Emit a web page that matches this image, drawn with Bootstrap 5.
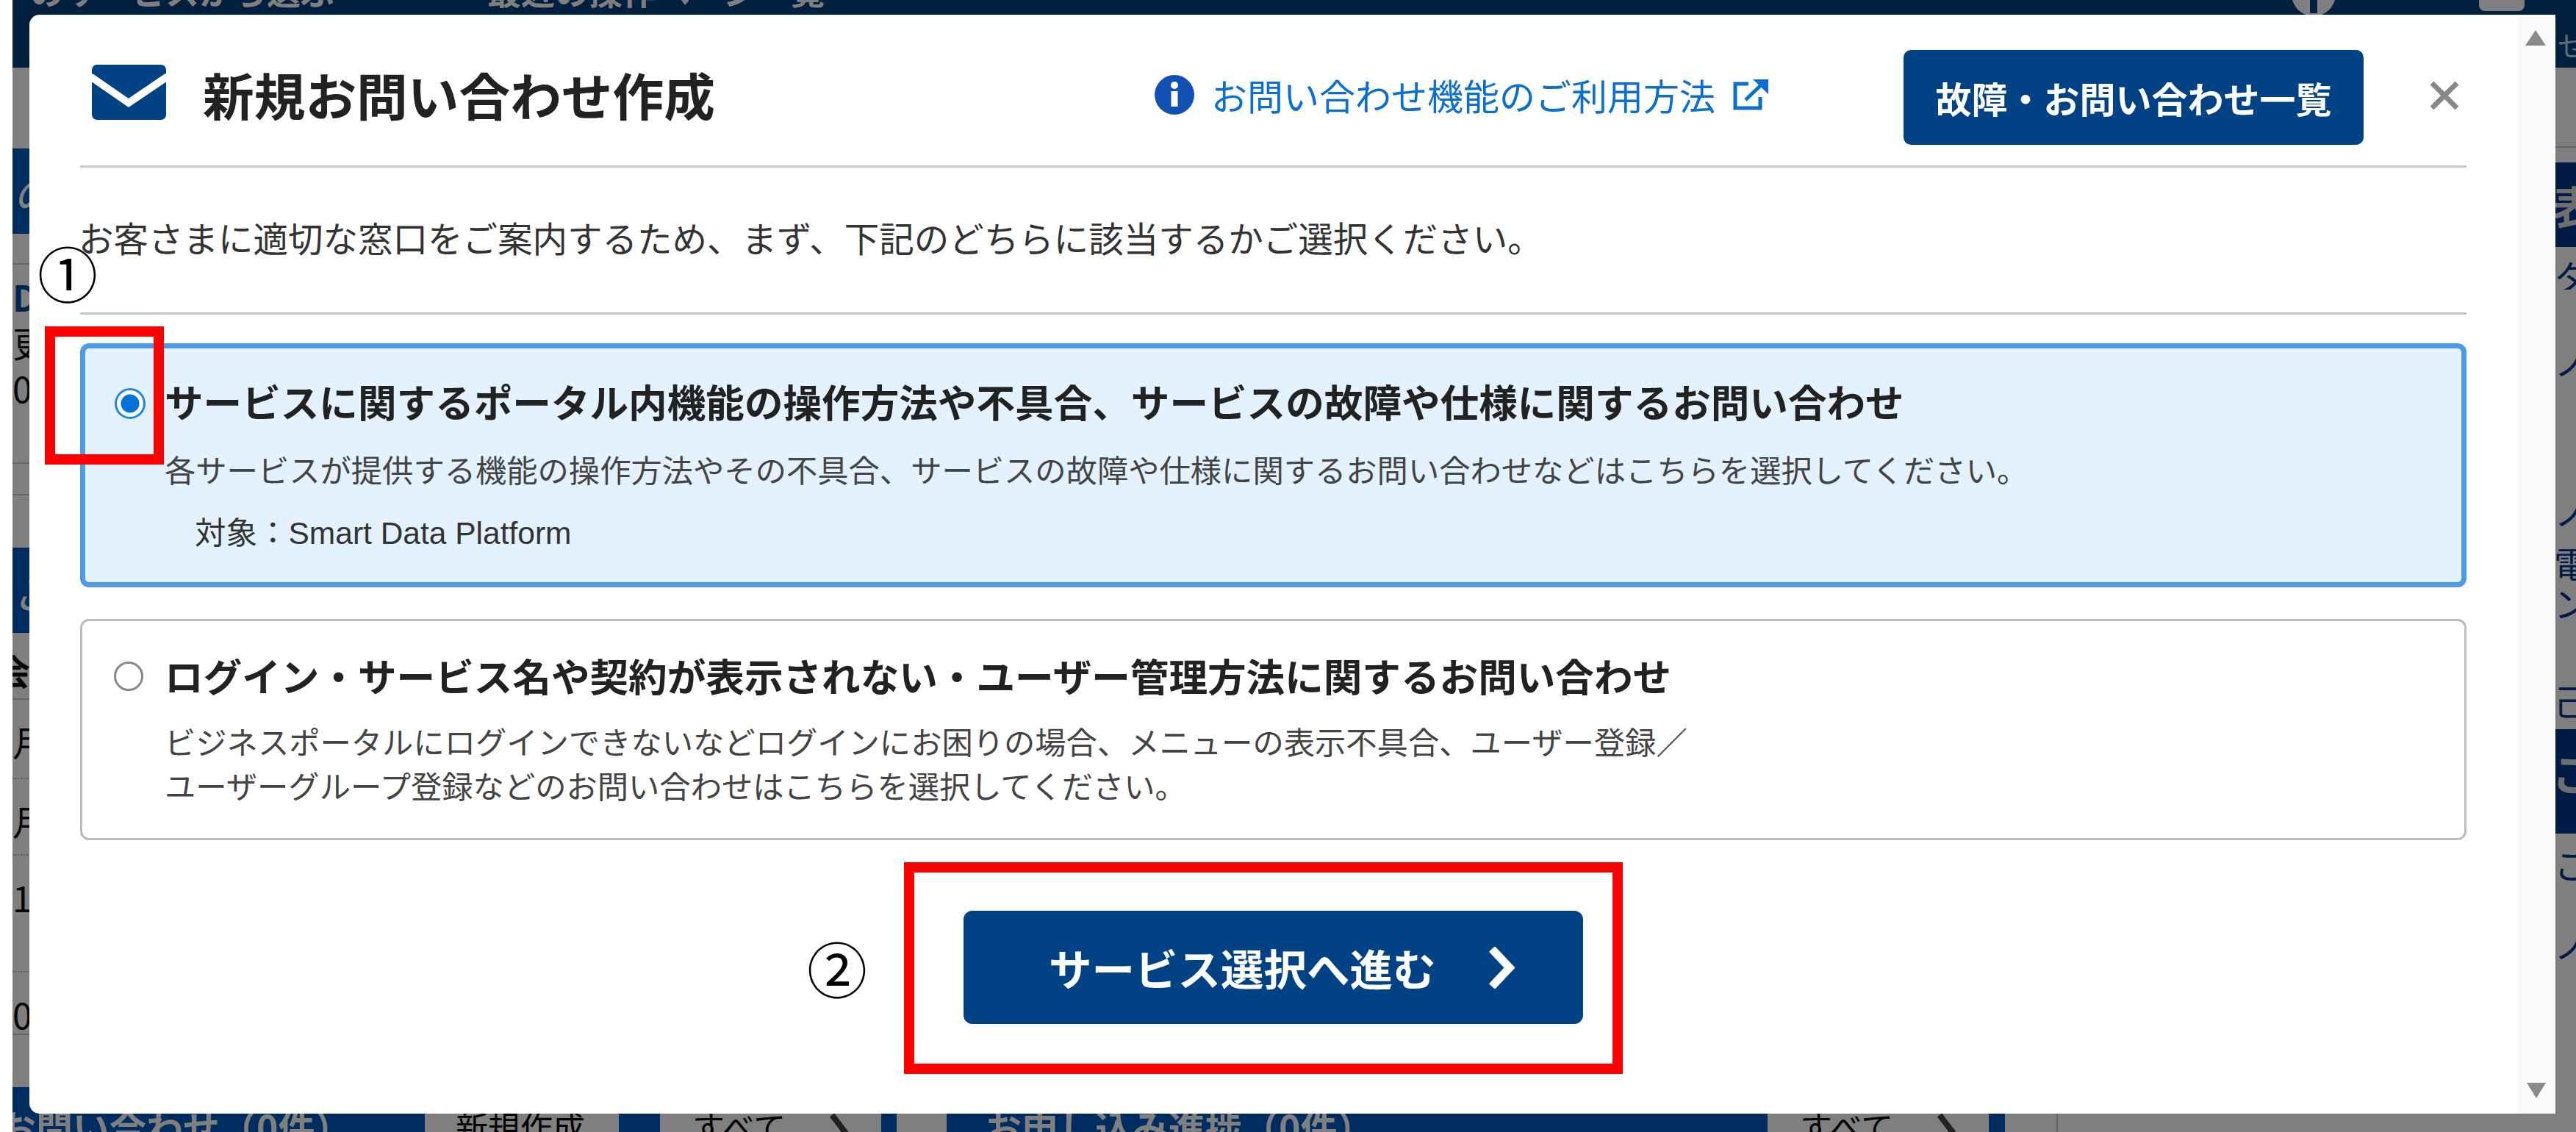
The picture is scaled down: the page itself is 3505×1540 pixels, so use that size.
<!DOCTYPE html>
<html lang="ja">
<head>
<meta charset="utf-8">
<title>新規お問い合わせ作成</title>
<link href="https://cdn.jsdelivr.net/npm/bootstrap@5.3.0/dist/css/bootstrap.min.css" rel="stylesheet">
<style>
html,body{height:100%;overflow:hidden;background:#fff}
body{font-family:"Liberation Sans","Noto Sans CJK JP",sans-serif;color:#333}
.ja{font-family:"Noto Sans CJK JP","Liberation Sans",sans-serif}
/* page behind the dialog */
.bg-page{margin-left:17px;width:3488px;height:1540px;overflow:hidden;background:#fff;color:#111;font-size:48px;line-height:60px;white-space:nowrap}
.bg-top{height:92px;background:#024080;color:#fff}
.bg-top-t{font-size:46px;line-height:46px;font-weight:700;margin-top:-37px}
.bg-top-t1{margin-left:24px}
.bg-top-t2{margin-left:208px}
.bg-top-c{width:60px;height:60px;margin-top:-38px;flex:none}
.bg-top-r{width:62px;height:62px;margin-top:-47px;margin-left:195px;flex:none}
.bg-top-s{flex:0 0 25px;width:25px;margin-left:45px;margin-top:30px;font-size:40px;color:#bcd4ee}
.bg-mid{height:1387px}
.bg-left{width:100px;flex:none;display:grid;grid-template-rows:110px 116px 42px 271px 43px 71px 116px 91px 108px 104px 159px 85px 71px}
.bg-right{width:60px;flex:none;padding-left:0;display:grid;grid-template-rows:109px 20px 115px 14px 44px 71px 127px 77px 71px 54px 133px 65px 142px 16px 58px 50px 50px 171px}
.lnav{background:#005abe;color:#fff;font-size:60px;font-style:italic;line-height:116px;margin-left:-27px;padding-left:27px;overflow:hidden}
.rnav{background:#00368c;color:#ddd;font-size:60px;font-weight:700;line-height:115px;padding-left:28px}
.ln{border-bottom:2px solid #ccc}
.ldot{border-bottom:2px dotted #bbb}
.lpad{padding-top:12px}
.lbold{font-weight:700;padding-top:20px;margin-left:-24px}
.ldat{padding-top:26px}
.lblue{color:#004a9e;font-weight:700;line-height:62px}
.ltext{line-height:62px}
.rtxt{color:#00368c;padding-left:30px;line-height:50px;overflow:hidden}
.bg-bottom{height:61px;background:#fff;font-size:50px}
.bb-nav{background:#005abe;color:#fff;font-weight:700;padding-top:23px;line-height:60px;overflow:hidden}
.bb-a{width:561px;padding-left:0;text-indent:-18px}
.bb-b{width:56px}
.bb-c{width:21px}
.bb-d{width:68px;background:#fff}
.bb-e{width:1117px;padding-left:52px}
.bb-f{width:22px}
.bb-btn{background:#fff;color:#000;font-size:44px;font-weight:400;padding-top:23px;line-height:60px;overflow:hidden}
.bb-b1{width:264px;padding-left:42px}
.bb-b2{width:301px;padding-left:44px}
.bb-rest{width:70px}
.bb-line{border-left:2px solid #ccc;flex-grow:1}
.bb-chev{margin-left:59px;margin-top:12px;flex:none}
.modal-backdrop{left:17px}
/* dialog */
.dlg.modal-dialog{max-width:none;width:3437px;margin:20px 0 0 40px;pointer-events:auto}
.dlg .modal-content{height:1495px;border:0;border-radius:14px 0 0 14px;padding:0 121px 0 69px;background:#fff}
.scroll-track{position:absolute;top:0;right:0;bottom:0;width:52px;background:#fafafa}
.scroll-up{position:absolute;left:11px;top:21px}
.scroll-down{position:absolute;left:13px;bottom:21px}
.dlg-head{height:208px;padding-top:20px;border-bottom:3px solid #c5c7d3}
.mail-ico{margin-left:16px;margin-bottom:15px}
.dlg-title{margin:0 0 10px 50px;font-size:69.7px;line-height:90px;font-weight:700;color:#222}
.help{margin-left:auto;color:#0b6fd1;font-size:49px;line-height:60px;text-decoration:none;margin-bottom:8px}
.help-txt{margin:0 23px 0 23px}
.list-btn.btn{width:626px;height:129px;margin-left:184px;padding:0;background:#014285;border:0;border-radius:10px;color:#fff;font-size:49px;font-weight:700;--bs-btn-hover-bg:#014285}
.x-btn.btn{margin:0 10px 5px 90px;padding:0;border:0;line-height:0}
.lead-txt{padding-top:65px;height:200px;margin:0;font-size:47.5px;line-height:60px;color:#333;border-bottom:3px solid #c5c5c5;text-indent:-2px}
.opt{border-radius:12px}
.opt-on{margin-top:39px;height:332px;border:7px solid #4d9ae6;background:#e3f2fe;padding:36px 0 0 40px}
.opt-off{margin-top:43px;height:301px;border:3px solid #bbb;background:#fff;padding:38px 0 0 43px}
.opt-radio.form-check-input{flex:none;margin:0;float:none;background-color:#fff}
.opt-on .opt-radio.form-check-input{width:42px;height:42px;margin-top:18px;border:3px solid #1f86e0;background-image:radial-gradient(circle,#0272d9 0 12px,#fff 13px)}
.opt-off .opt-radio.form-check-input{width:40px;height:40px;margin-top:17px;border:3px solid #888}
.opt-body-a{margin-left:26px}
.opt-body-b{margin-left:29px}
.opt-title{font-size:52.6px;line-height:70px;font-weight:700;color:#222;white-space:nowrap;display:block;margin:0}
.opt-sub{font-size:42.3px;line-height:60px;color:#444;margin:28px 0 0}
.opt-off .opt-sub{margin-top:25px}
.opt-target{font-size:42.5px;line-height:60px;color:#333;margin:24px 0 0 41px}
.go-row{margin-top:96px}
.go-btn.btn{width:843px;height:154px;padding:0 0 0 116px;background:#014285;border:0;border-radius:12px;color:#fff;font-size:58.5px;font-weight:700;--bs-btn-hover-bg:#014285}
.go-chev{margin-left:71px}
/* annotations on top of the dialog */
.red-mark{position:absolute;border:14px solid #f00;pointer-events:none}
.red-1{left:21px;top:424px;width:162px;height:188px}
.red-2{left:1190px;top:1153px;width:978px;height:288px}
.num-mark{position:absolute;font-family:"Noto Sans CJK JP",serif;font-size:82px;line-height:82px;color:#000}
.num-1{left:11px;top:309px}
.num-2{left:1058px;top:1255px}
.lat{font-family:"Liberation Sans",sans-serif}
</style>
</head>
<body>
<div class="bg-page ja">
  <div class="bg-top d-flex align-items-start">
    <span class="bg-top-t bg-top-t1">のサービスから選ぶ</span>
    <span class="bg-top-t bg-top-t2">最近の操作ページ一覧</span>
    <span class="flex-grow-1"></span>
    <svg class="bg-top-c" viewBox="0 0 60 60"><circle cx="30" cy="30" r="30" fill="#fff"/><rect x="25" y="26" width="10" height="30" fill="#024080"/></svg>
    <svg class="bg-top-r" viewBox="0 0 62 62"><rect width="62" height="62" rx="8" fill="#fff"/><rect x="26" y="30" width="10" height="14" fill="#024080"/></svg>
    <span class="bg-top-s">せ</span>
  </div>
  <div class="bg-mid d-flex justify-content-between">
    <div class="bg-left">
      <div></div>
      <div class="lnav">の</div>
      <div class="ln"></div>
      <div class="ln lpad">
        <div class="lblue">D</div>
        <div class="ltext">更</div>
        <div class="ltext">00</div>
      </div>
      <div class="ln"></div>
      <div></div>
      <div class="lnav">ご</div>
      <div class="ln lbold">会員</div>
      <div class="ldot ldat">月</div>
      <div class="ldot ldat">月</div>
      <div class="ldot ldat">1/</div>
      <div class="ln ldat">0/</div>
      <div></div>
    </div>
    <div class="bg-right">
      <div class="ln"></div>
      <div></div>
      <div class="rnav">表</div>
      <div></div>
      <div class="rtxt">タ</div>
      <div></div>
      <div class="rtxt">ノ</div>
      <div></div>
      <div class="rtxt">ノ</div>
      <div class="rtxt">電</div>
      <div class="rtxt">ン</div>
      <div class="rtxt">己</div>
      <div class="rnav">ご</div>
      <div></div>
      <div class="rtxt">こ</div>
      <div></div>
      <div class="rtxt">ノ</div>
      <div></div>
    </div>
  </div>
  <div class="bg-bottom d-flex">
    <div class="bb-nav bb-a">お問い合わせ（0件）</div>
    <div class="bb-btn bb-b1">新規作成</div>
    <div class="bb-nav bb-b"></div>
    <div class="bb-btn bb-b2 d-flex"><span>すべて</span><svg class="bb-chev" width="26" height="50" viewBox="0 0 26 50"><polyline points="4,3 21,25 4,47" fill="none" stroke="#444" stroke-width="8"/></svg></div>
    <div class="bb-nav bb-c"></div>
    <div class="bb-d"></div>
    <div class="bb-nav bb-e">お申し込み進捗（0件）</div>
    <div class="bb-btn bb-b2 d-flex"><span>すべて</span><svg class="bb-chev" width="26" height="50" viewBox="0 0 26 50"><polyline points="4,3 21,25 4,47" fill="none" stroke="#444" stroke-width="8"/></svg></div>
    <div class="bb-nav bb-f"></div>
    <div class="bb-rest"></div>
    <div class="bb-line"></div>
  </div>
</div>

<div class="modal-backdrop show"></div>

<div class="modal d-block" tabindex="-1">
  <div class="modal-dialog dlg">
    <div class="modal-content ja">
      <div class="scroll-track">
        <svg class="scroll-up" width="28" height="21" viewBox="0 0 28 21"><path d="M14 0 L28 21 H0 Z" fill="#8a8a8a"/></svg>
        <svg class="scroll-down" width="26" height="21" viewBox="0 0 26 21"><path d="M0 0 H26 L13 21 Z" fill="#8a8a8a"/></svg>
      </div>

      <div class="dlg-head d-flex align-items-center align-self-stretch">
        <svg class="mail-ico flex-shrink-0" width="101" height="75" viewBox="0 0 101 75"><rect width="101" height="75" rx="7" fill="#014285"/><polyline points="-2,16 50,52 103,16" fill="none" stroke="#fff" stroke-width="10"/></svg>
        <h1 class="dlg-title">新規お問い合わせ作成</h1>
        <a class="help d-flex align-items-center" href="#">
          <svg width="54" height="54" viewBox="0 0 54 54"><circle cx="27" cy="27" r="27" fill="#1250b4"/><circle cx="27" cy="14" r="5" fill="#fff"/><rect x="22.500" y="22" width="9" height="21" fill="#fff"/></svg>
          <span class="help-txt">お問い合わせ機能のご利用方法</span>
          <svg width="49" height="42" viewBox="0 0 49 42"><path d="M22 6 H4 V39 H38 V24" fill="none" stroke="#0b6fd1" stroke-width="5"/><path d="M18 28 L42 5" fill="none" stroke="#0b6fd1" stroke-width="5"/><path d="M28 0 H49 V20 Z" fill="#0b6fd1"/></svg>
        </a>
        <button type="button" class="btn list-btn flex-shrink-0">故障・お問い合わせ一覧</button>
        <button type="button" class="btn x-btn flex-shrink-0" aria-label="閉じる"><svg width="40" height="38" viewBox="0 0 40 38"><path d="M3 2 L37 36 M37 2 L3 36" stroke="#888" stroke-width="7" fill="none"/></svg></button>
      </div>

      <p class="lead-txt">お客さまに適切な窓口をご案内するため、まず、下記のどちらに該当するかご選択ください。</p>

      <div class="opt opt-on d-flex">
        <input class="form-check-input opt-radio" type="radio" name="kind" id="kind1" checked>
        <div class="opt-body-a">
          <label class="opt-title" for="kind1">サービスに関するポータル内機能の操作方法や不具合、サービスの故障や仕様に関するお問い合わせ</label>
          <p class="opt-sub">各サービスが提供する機能の操作方法やその不具合、サービスの故障や仕様に関するお問い合わせなどはこちらを選択してください。</p>
          <p class="opt-target">対象：<span class="lat">Smart Data Platform</span></p>
        </div>
      </div>

      <div class="opt opt-off d-flex">
        <input class="form-check-input opt-radio" type="radio" name="kind" id="kind2">
        <div class="opt-body-b">
          <label class="opt-title" for="kind2">ログイン・サービス名や契約が表示されない・ユーザー管理方法に関するお問い合わせ</label>
          <p class="opt-sub">ビジネスポータルにログインできないなどログインにお困りの場合、メニューの表示不具合、ユーザー登録／<br>ユーザーグループ登録などのお問い合わせはこちらを選択してください。</p>
        </div>
      </div>

      <div class="go-row d-flex justify-content-center">
        <button type="button" class="btn go-btn d-flex align-items-center">
          <span>サービス選択へ進む</span>
          <svg class="go-chev" width="37" height="57" viewBox="0 0 37 57"><polyline points="5,3 29,28.500 5,54" fill="none" stroke="#fff" stroke-width="11"/></svg>
        </button>
      </div>

      <div class="red-mark red-1"></div>
      <div class="red-mark red-2"></div>
      <span class="num-mark num-1">①</span>
      <span class="num-mark num-2">②</span>
    </div>
  </div>
</div>
<script src="https://cdn.jsdelivr.net/npm/bootstrap@5.3.0/dist/js/bootstrap.bundle.min.js"></script>
</body>
</html>
